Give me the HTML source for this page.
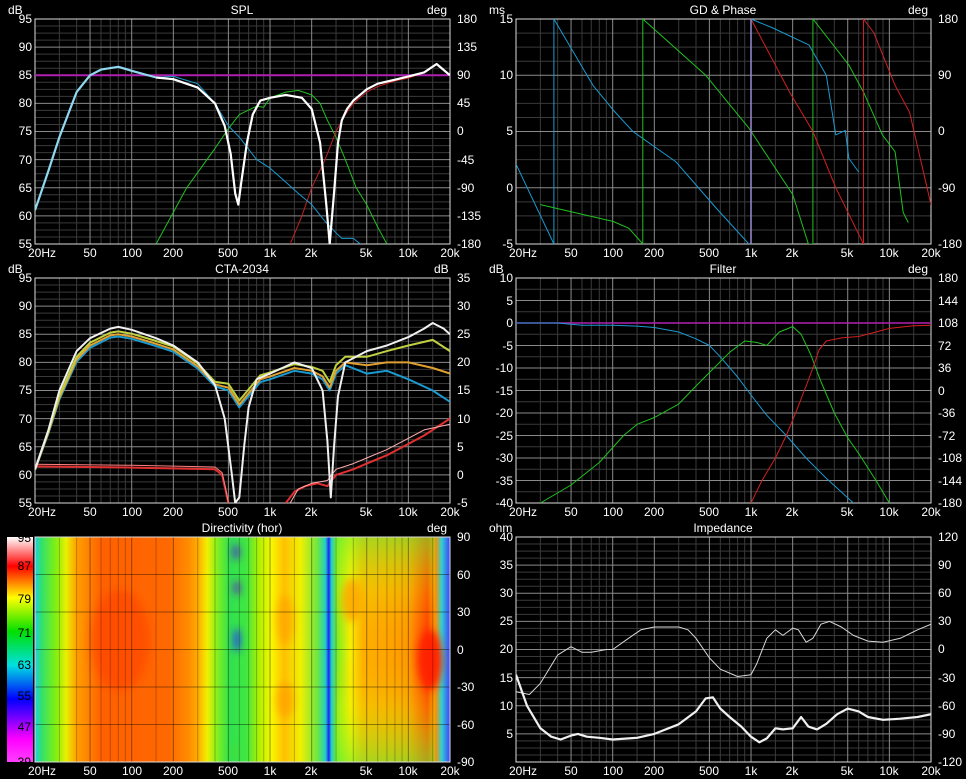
<!DOCTYPE html>
<html><head><meta charset="utf-8">
<style>
html,body{margin:0;padding:0;background:#000;}
svg{display:block}
text{font-family:"Liberation Sans",Arial,sans-serif;font-size:12px;fill:#fff}
.t{text-anchor:middle}
.r{text-anchor:end}
</style></head>
<body>
<svg id="s" width="966" height="779" viewBox="0 0 966 779" xmlns="http://www.w3.org/2000/svg">
<defs>
<linearGradient id="hm" x1="0" x2="1" y1="0" y2="0">
<stop offset="0" stop-color="#20d0e8"/>
<stop offset="0.015" stop-color="#30e070"/>
<stop offset="0.05" stop-color="#80f010"/>
<stop offset="0.075" stop-color="#e8f000"/>
<stop offset="0.1" stop-color="#ffa000"/>
<stop offset="0.16" stop-color="#ff6000"/>
<stop offset="0.32" stop-color="#ff6800"/>
<stop offset="0.37" stop-color="#ff8c00"/>
<stop offset="0.395" stop-color="#ffb000"/>
<stop offset="0.415" stop-color="#f0f000"/>
<stop offset="0.44" stop-color="#80f020"/>
<stop offset="0.47" stop-color="#30e050"/>
<stop offset="0.51" stop-color="#40e840"/>
<stop offset="0.54" stop-color="#b0f000"/>
<stop offset="0.57" stop-color="#f8f800"/>
<stop offset="0.6" stop-color="#ffc000"/>
<stop offset="0.64" stop-color="#f0f000"/>
<stop offset="0.68" stop-color="#70e840"/>
<stop offset="0.7" stop-color="#20d0c0"/>
<stop offset="0.708" stop-color="#2020ff"/>
<stop offset="0.714" stop-color="#20d0c0"/>
<stop offset="0.73" stop-color="#80f020"/>
<stop offset="0.76" stop-color="#f8f000"/>
<stop offset="0.79" stop-color="#ffb000"/>
<stop offset="0.9" stop-color="#ff9800"/>
<stop offset="0.945" stop-color="#ff3800"/>
<stop offset="0.965" stop-color="#ff9000"/>
<stop offset="0.98" stop-color="#30d0d0"/>
<stop offset="1" stop-color="#4040ff"/>
</linearGradient>
<linearGradient id="cb" x1="0" x2="0" y1="0" y2="1">
<stop offset="0" stop-color="#ffffff"/>
<stop offset="0.13" stop-color="#ff0000"/>
<stop offset="0.27" stop-color="#ffff00"/>
<stop offset="0.42" stop-color="#00e000"/>
<stop offset="0.57" stop-color="#00e0e0"/>
<stop offset="0.72" stop-color="#0000ff"/>
<stop offset="0.9" stop-color="#ff00ff"/>
<stop offset="1" stop-color="#ff40ff"/>
</linearGradient>
<linearGradient id="vt" x1="0" x2="0" y1="0" y2="1">
<stop offset="0" stop-color="#70f030" stop-opacity="0.6"/>
<stop offset="0.25" stop-color="#e0f000" stop-opacity="0.25"/>
<stop offset="0.5" stop-color="#ffa000" stop-opacity="0"/>
<stop offset="0.75" stop-color="#e0f000" stop-opacity="0.25"/>
<stop offset="1" stop-color="#70f030" stop-opacity="0.6"/>
</linearGradient>
<filter id="bl"><feGaussianBlur stdDeviation="4"/></filter>
<clipPath id="hc"><rect x="35" y="537" width="415" height="225"/></clipPath>
</defs>
<g id="grids"></g>
<g clip-path="url(#hc)">
<rect x="35" y="537" width="415" height="225" fill="url(#hm)"/>
<rect x="335" y="537" width="100" height="225" fill="url(#vt)"/>
<g filter="url(#bl)">
<ellipse cx="236" cy="552" rx="3" ry="8" fill="#5020d0"/>
<ellipse cx="237" cy="588" rx="3" ry="7" fill="#6020c0"/>
<ellipse cx="237" cy="640" rx="3" ry="12" fill="#2030ff"/>
<ellipse cx="430" cy="660" rx="12" ry="30" fill="#ff2000"/>
<ellipse cx="352" cy="600" rx="10" ry="22" fill="#ffa000" opacity="0.8"/>
<ellipse cx="285" cy="700" rx="8" ry="18" fill="#ffa000" opacity="0.8"/>
<ellipse cx="285" cy="620" rx="8" ry="25" fill="#ffa000" opacity="0.7"/>
<ellipse cx="120" cy="640" rx="30" ry="50" fill="#ff3000" opacity="0.4"/>
<ellipse cx="235" cy="752" rx="8" ry="8" fill="#40e040" opacity="0.8"/>
</g>
</g>
<rect x="7" y="537" width="26" height="225" fill="url(#cb)"/>
<g id="curves"></g>

<text x="242" y="14" class="t">SPL</text>
<text x="723" y="14" class="t">GD &amp; Phase</text>
<text x="242" y="273" class="t">CTA-2034</text>
<text x="723" y="273" class="t">Filter</text>
<text x="242" y="532" class="t">Directivity (hor)</text>
<text x="723" y="532" class="t">Impedance</text>
<text x="8" y="14">dB</text><text x="427" y="14">deg</text>
<text x="489" y="14">ms</text><text x="908" y="14">deg</text>
<text x="8" y="273">dB</text><text x="434" y="273">dB</text>
<text x="489" y="273">dB</text><text x="908" y="273">deg</text>
<text x="427" y="532">deg</text>
<text x="489" y="532">ohm</text>

<g>
<text x="32" y="23" class="r">95</text><text x="32" y="51" class="r">90</text><text x="32" y="79" class="r">85</text><text x="32" y="107" class="r">80</text><text x="32" y="135" class="r">75</text><text x="32" y="164" class="r">70</text><text x="32" y="192" class="r">65</text><text x="32" y="220" class="r">60</text><text x="32" y="248" class="r">55</text>
<text x="32" y="282" class="r">95</text><text x="32" y="310" class="r">90</text><text x="32" y="338" class="r">85</text><text x="32" y="366" class="r">80</text><text x="32" y="394" class="r">75</text><text x="32" y="423" class="r">70</text><text x="32" y="451" class="r">65</text><text x="32" y="479" class="r">60</text><text x="32" y="507" class="r">55</text>
<text x="513" y="23" class="r">15</text><text x="513" y="79" class="r">10</text><text x="513" y="135" class="r">5</text><text x="513" y="192" class="r">0</text><text x="513" y="248" class="r">-5</text>
<text x="513" y="282" class="r">10</text><text x="513" y="305" class="r">5</text><text x="513" y="327" class="r">0</text><text x="513" y="350" class="r">-5</text><text x="513" y="372" class="r">-10</text><text x="513" y="395" class="r">-15</text><text x="513" y="417" class="r">-20</text><text x="513" y="440" class="r">-25</text><text x="513" y="462" class="r">-30</text><text x="513" y="485" class="r">-35</text><text x="513" y="507" class="r">-40</text>
<text x="513" y="541" class="r">40</text><text x="513" y="569" class="r">35</text><text x="513" y="597" class="r">30</text><text x="513" y="625" class="r">25</text><text x="513" y="653" class="r">20</text><text x="513" y="682" class="r">15</text><text x="513" y="710" class="r">10</text><text x="513" y="738" class="r">5</text>
</g>
<text x="457" y="23">180</text><text x="457" y="51">135</text><text x="457" y="79">90</text><text x="457" y="107">45</text><text x="457" y="135">0</text><text x="457" y="164">-45</text><text x="457" y="192">-90</text><text x="457" y="220">-135</text><text x="457" y="248">-180</text>
<text x="457" y="282">35</text><text x="457" y="310">30</text><text x="457" y="338">25</text><text x="457" y="366">20</text><text x="457" y="394">15</text><text x="457" y="423">10</text><text x="457" y="451">5</text><text x="457" y="479">0</text><text x="457" y="507">-5</text>
<text x="457" y="541">90</text><text x="457" y="579">60</text><text x="457" y="616">30</text><text x="457" y="654">0</text><text x="457" y="691">-30</text><text x="457" y="729">-60</text><text x="457" y="766">-90</text>
<text x="938" y="23">180</text><text x="938" y="79">90</text><text x="938" y="135">0</text><text x="938" y="192">-90</text><text x="938" y="248">-180</text>
<text x="938" y="282">180</text><text x="938" y="305">144</text><text x="938" y="327">108</text><text x="938" y="350">72</text><text x="938" y="372">36</text><text x="938" y="395">0</text><text x="938" y="417">-36</text><text x="938" y="440">-72</text><text x="938" y="462">-108</text><text x="938" y="485">-144</text><text x="938" y="507">-180</text>
<text x="938" y="541">120</text><text x="938" y="569">90</text><text x="938" y="597">60</text><text x="938" y="625">30</text><text x="938" y="653">0</text><text x="938" y="682">-30</text><text x="938" y="710">-60</text><text x="938" y="738">-90</text><text x="938" y="766">-120</text>
<text x="31" y="542" class="r" style="fill:#000">95</text>
<text x="31" y="570" class="r" style="fill:#000">87</text>
<text x="31" y="603" class="r" style="fill:#000">79</text>
<text x="31" y="637" class="r" style="fill:#000">71</text>
<text x="31" y="669" class="r" style="fill:#000">63</text>
<text x="31" y="700" class="r" style="fill:#000">55</text>
<text x="31" y="731" class="r" style="fill:#000">47</text>
<text x="31" y="766" class="r" style="fill:#000">39</text>
<g>
<text x="28" y="257">20Hz</text><text x="90" y="257" class="t">50</text><text x="132" y="257" class="t">100</text><text x="173" y="257" class="t">200</text><text x="228" y="257" class="t">500</text><text x="270" y="257" class="t">1k</text><text x="311" y="257" class="t">2k</text><text x="366" y="257" class="t">5k</text><text x="408" y="257" class="t">10k</text><text x="450" y="257" class="t">20k</text>
<text x="28" y="516">20Hz</text><text x="90" y="516" class="t">50</text><text x="132" y="516" class="t">100</text><text x="173" y="516" class="t">200</text><text x="228" y="516" class="t">500</text><text x="270" y="516" class="t">1k</text><text x="311" y="516" class="t">2k</text><text x="366" y="516" class="t">5k</text><text x="408" y="516" class="t">10k</text><text x="450" y="516" class="t">20k</text>
<text x="28" y="775">20Hz</text><text x="90" y="775" class="t">50</text><text x="132" y="775" class="t">100</text><text x="173" y="775" class="t">200</text><text x="228" y="775" class="t">500</text><text x="270" y="775" class="t">1k</text><text x="311" y="775" class="t">2k</text><text x="366" y="775" class="t">5k</text><text x="408" y="775" class="t">10k</text><text x="450" y="775" class="t">20k</text>
<text x="509" y="257">20Hz</text><text x="571" y="257" class="t">50</text><text x="613" y="257" class="t">100</text><text x="654" y="257" class="t">200</text><text x="709" y="257" class="t">500</text><text x="751" y="257" class="t">1k</text><text x="792" y="257" class="t">2k</text><text x="847" y="257" class="t">5k</text><text x="889" y="257" class="t">10k</text><text x="931" y="257" class="t">20k</text>
<text x="509" y="516">20Hz</text><text x="571" y="516" class="t">50</text><text x="613" y="516" class="t">100</text><text x="654" y="516" class="t">200</text><text x="709" y="516" class="t">500</text><text x="751" y="516" class="t">1k</text><text x="792" y="516" class="t">2k</text><text x="847" y="516" class="t">5k</text><text x="889" y="516" class="t">10k</text><text x="931" y="516" class="t">20k</text>
<text x="509" y="775">20Hz</text><text x="571" y="775" class="t">50</text><text x="613" y="775" class="t">100</text><text x="654" y="775" class="t">200</text><text x="709" y="775" class="t">500</text><text x="751" y="775" class="t">1k</text><text x="792" y="775" class="t">2k</text><text x="847" y="775" class="t">5k</text><text x="889" y="775" class="t">10k</text><text x="931" y="775" class="t">20k</text>
</g>
</svg>
<script>
(function(){
var NS="http://www.w3.org/2000/svg";
var G=document.getElementById("grids"),C=document.getElementById("curves");
function el(p,tag,a){var e=document.createElementNS(NS,tag);for(var k in a)e.setAttribute(k,a[k]);p.appendChild(e);return e;}
var W=415,H=225,K=W/3;
function X(L,f){return L+K*Math.log10(f/20);}
var majors=[20,50,100,200,500,1000,2000,5000,10000,20000];
var minors=[30,40,60,70,80,90,300,400,600,700,800,900,3000,4000,6000,7000,8000,9000,150,1500,15000];
function grid(L,T,n,sub,heat){
  var minc=heat?"rgba(0,0,0,0.25)":"#3a3a3a",majc=heat?"rgba(0,0,0,0.4)":"#8a8a8a";
  if(!heat)el(G,"rect",{x:L,y:T,width:W,height:H,fill:"#000"});
  var g=heat?C:G;
  minors.forEach(function(f){var x=X(L,f);el(g,"line",{x1:x,x2:x,y1:T,y2:T+H,stroke:minc,"stroke-width":1});});
  var s=H/n;
  for(var i=1;i<n;i++){
    if(!heat)for(var j=1;j<sub;j++){var y=T+i*s-s+j*s/sub;el(G,"line",{x1:L,x2:L+W,y1:y,y2:y,stroke:"#3a3a3a"});}
    el(g,"line",{x1:L,x2:L+W,y1:T+i*s,y2:T+i*s,stroke:majc});
  }
  if(!heat)for(var j=1;j<sub;j++){var y=T+(n-1)*s+j*s/sub;el(G,"line",{x1:L,x2:L+W,y1:y,y2:y,stroke:"#3a3a3a"});}
  majors.forEach(function(f){var x=X(L,f);el(g,"line",{x1:x,x2:x,y1:T,y2:T+H,stroke:majc});});
  el(g,"rect",{x:L,y:T,width:W,height:H,fill:"none",stroke:"#ddd","stroke-width":1});
}
grid(35,19,8,4);grid(516,19,4,4);grid(35,278,8,4);grid(516,278,10,2);grid(516,537,8,4);
grid(35,537,6,1,true);
function curve(L,T,vmax,vmin,col,w,pts){
  var d="";pts.forEach(function(p,i){var x=X(L,p[0]),y=T+(vmax-p[1])/(vmax-vmin)*H;d+=(i?"L":"M")+x.toFixed(1)+" "+y.toFixed(1);});
  el(C,"path",{d:d,fill:"none",stroke:col,"stroke-width":w,"stroke-linejoin":"round"});
}
function clip(id,L,T){var d=document.querySelector("defs");var cp=el(d,"clipPath",{id:id});el(cp,"rect",{x:L,y:T,width:W,height:H});}
clip("c1",35,19);clip("c2",516,19);clip("c3",35,278);clip("c4",516,278);clip("c6",516,537);
var gs={};
["c1","c2","c3","c4","c6"].forEach(function(k){gs[k]=el(C,"g",{"clip-path":"url(#"+k+")"});});
var CC=C;
function cv(k,L,T,a,b,col,w,p){C=gs[k];curve(L,T,a,b,col,w,p);C=CC;}
cv("c1",35,19,95,55,"#b020b0",2,[[20,85],[20000,85]]);
cv("c1",35,19,95,55,"#20c020",1,[[150,55],[250,65],[400,72],[500,75.5],[600,78],[800,79.5],[900,79.3],[1000,81],[1300,82],[1600,82.3],[2000,81.5],[2300,80],[2600,77],[3000,74],[3500,70],[4200,65],[5000,62],[6000,58],[7000,55]]);
cv("c1",35,19,95,55,"#c02020",1,[[1400,55],[1700,60],[2000,65],[2500,70],[3000,75],[3500,78],[4000,80],[5000,82],[6000,83],[8000,84],[10000,84.5],[13000,85.5],[16000,87],[20000,85]]);
cv("c1",35,19,95,55,"#1a9ad0",1,[[20,61],[25,68],[30,74],[40,82],[50,85],[60,86],[80,86.5],[100,85.8],[150,84.6],[200,84.8],[300,83.5],[400,80],[500,76],[600,74],[800,70],[1000,68.5],[1300,66],[1600,64],[2000,62],[2500,59],[3000,57],[3300,56],[4000,56],[4500,55]]);
cv("c1",35,19,95,55,"#ffffff",2.2,[[150,84.6],[200,84.3],[300,82.8],[400,80],[470,76],[520,71],[560,64],[590,62],[620,66],[680,73],[750,78],[850,80.5],[1000,81],[1300,81.5],[1700,81],[2000,79],[2300,73],[2550,62],[2700,55],[2900,64],[3100,73],[3300,77],[3600,79],[4000,80.5],[5000,82.5],[6000,83.5],[8000,84.2],[10000,84.8],[13000,85.5],[16000,87],[20000,85]]);
cv("c1",35,19,95,55,"#8fd8f0",2.2,[[20,61],[25,68],[30,74],[40,82],[50,85],[60,86],[80,86.5],[100,85.8],[150,84.6]]);
cv("c2",516,19,15,-5,"#1a9ad0",1,[[20,2.1],[37.6,-5],[37.6,15],[72,9.1],[101,6.9],[140,5],[287,2.3],[559,-1.8],[965,-5]]);
cv("c2",516,19,15,-5,"#1a9ad0",1,[[1000,15],[1440,14.2],[2620,12.7],[3500,10],[4100,4.7],[4800,5.1],[5100,2.6],[6000,1.4]]);
cv("c2",516,19,15,-5,"#20c020",1,[[30,-1.5],[101,-3],[131,-3.6],[165,-5],[165,15],[470,10],[965,5.3],[2000,-0.6],[2600,-5],[2800,-5],[2800,15],[5100,10.9],[6500,8.5],[8900,4.7],[11000,3.2],[12600,-2.2],[13700,-3.1]]);
cv("c2",516,19,15,-5,"#d02020",1,[[1000,15],[1900,8.5],[2800,5],[4100,0],[6500,-5],[6500,15],[7700,13.8],[11000,9.1],[14000,6.7],[20000,-1.5]]);
cv("c2",516,19,15,-5,"#9a8ad0",1.5,[[1000,-5],[1000,15]]);
var base=[[20,61],[25,68],[30,74.5],[40,81.5],[50,84],[70,85.8],[80,86],[100,85.6],[150,84.3],[200,83.3],[300,80.3],[400,77]];
function mk(peak,dip1,dip2,hi){var o=base.map(function(p){return [p[0],p[1]-(86-peak)*Math.min(1,(p[1]-61)/20+0.1)];});
return o.concat([[500,dip1+3],[600,dip1],[700,dip1+2],[850,dip1+4.5],[1000,dip1+5],[1500,dip1+6.5],[2000,dip1+6],[2400,dip2+2],[2700,dip2],[3000,dip2+3],[3500,dip2+4.5],[5000,hi[0]],[7000,hi[1]],[10000,hi[2]],[15000,hi[3]],[20000,hi[4]]]);}
cv("c3",35,278,95,55,"#e03030",2,[[20,61.5],[100,61.3],[400,61],[450,60],[480,57],[500,55]]);
cv("c3",35,278,95,55,"#ff8080",1,[[20,61.9],[100,61.7],[400,61.4],[450,60.4],[480,57.4],[500,55]]);
cv("c3",35,278,95,55,"#e03030",2,[[1300,55],[1500,57],[1800,58],[2200,58.5],[2600,58],[3000,60],[4000,61],[5000,62],[7000,63.5],[10000,65.5],[13000,67],[20000,70]]);
cv("c3",35,278,95,55,"#ffb0b0",1,[[1400,55],[1600,57.5],[2000,58.5],[2600,59],[3000,61],[4000,62],[5000,63],[7000,64.5],[10000,66.5],[13000,68],[20000,69]]);
cv("c3",35,278,95,55,"#1a9ad0",2,mk(84.6,72,75,[78,78.5,77,75,73]));
cv("c3",35,278,95,55,"#e0a030",2,mk(85,72.5,75.5,[79.5,80,80,79,78]));
cv("c3",35,278,95,55,"#c0d040",2,mk(85.5,73.2,76.5,[81,82,83,84,82]));
cv("c3",35,278,95,55,"#f0f0f0",2,[[20,61],[25,68],[30,75],[40,82],[50,84.3],[70,86],[80,86.3],[100,85.8],[150,84.3],[200,83],[300,80],[400,76],[470,70],[530,60],[560,55],[600,56],[650,65],[700,72],[800,77],[1000,78],[1500,80],[2000,79],[2400,75],[2600,66],[2750,56],[2900,65],[3100,74],[3500,80],[5000,82],[7000,83],[10000,84.5],[13000,86],[15000,87],[18000,86],[20000,85]]);
cv("c4",516,278,10,-40,"#b020b0",1.5,[[20,0],[20000,0]]);
cv("c4",516,278,10,-40,"#1a9ad0",1,[[20,0],[40,0],[60,-0.5],[100,-0.5],[150,-0.7],[200,-1],[300,-2],[400,-3.5],[500,-5],[600,-7.5],[800,-12],[1000,-16],[1300,-20.5],[1800,-25],[2500,-30],[3500,-34.5],[5500,-40]]);
cv("c4",516,278,10,-40,"#20c020",1,[[30,-40],[50,-36],[80,-31],[120,-25],[150,-22.5],[200,-21],[300,-18],[400,-14],[500,-11],[700,-6.5],[900,-4],[1100,-4.3],[1300,-5],[1600,-2],[2000,-0.8],[2300,-2.5],[2700,-7],[3200,-13],[4000,-20],[5000,-25.5],[6000,-29],[8000,-35],[10000,-40]]);
cv("c4",516,278,10,-40,"#d02020",1,[[1000,-40],[1200,-35],[1500,-30],[1800,-25],[2100,-20],[2500,-14],[2800,-10],[3100,-6],[3500,-4],[4500,-3.3],[6000,-3],[8000,-2],[10000,-1.2],[15000,-0.6],[20000,-0.5]]);
cv("c6",516,537,40,0,"#d8d8d8",1,[[20,12.5],[25,12],[30,14],[40,19],[50,20.5],[60,19.5],[70,19.5],[90,20],[100,20],[130,22],[160,23.5],[200,24],[300,24],[350,23.5],[400,22],[500,18.5],[600,16.5],[800,15.2],[1000,15.5],[1100,17.5],[1300,22],[1500,23.5],[1700,22.5],[2000,23.8],[2200,23.5],[2500,21.3],[2800,22],[3200,24.5],[3700,25],[4500,24],[5500,22.5],[7000,21.5],[9000,21.3],[12000,22],[16000,23.5],[20000,24.5]]);
cv("c6",516,537,40,0,"#f0f0f0",2.2,[[20,15.5],[24,10],[30,6],[36,4.5],[42,4],[50,4.7],[56,5],[65,4.5],[80,4.3],[100,4],[150,4.3],[200,5],[300,6.7],[400,9],[470,11.3],[530,11.5],[600,9.5],[700,8],[850,6.3],[1000,4.5],[1150,3.5],[1300,4.2],[1500,6],[1700,5.8],[2000,6],[2300,8],[2600,6.3],[3000,5.8],[3500,6.8],[4200,8.5],[5000,9.5],[6000,9],[7000,8],[9000,7.5],[12000,7.7],[16000,8],[20000,8.5]]);
})();
</script>
</body></html>
